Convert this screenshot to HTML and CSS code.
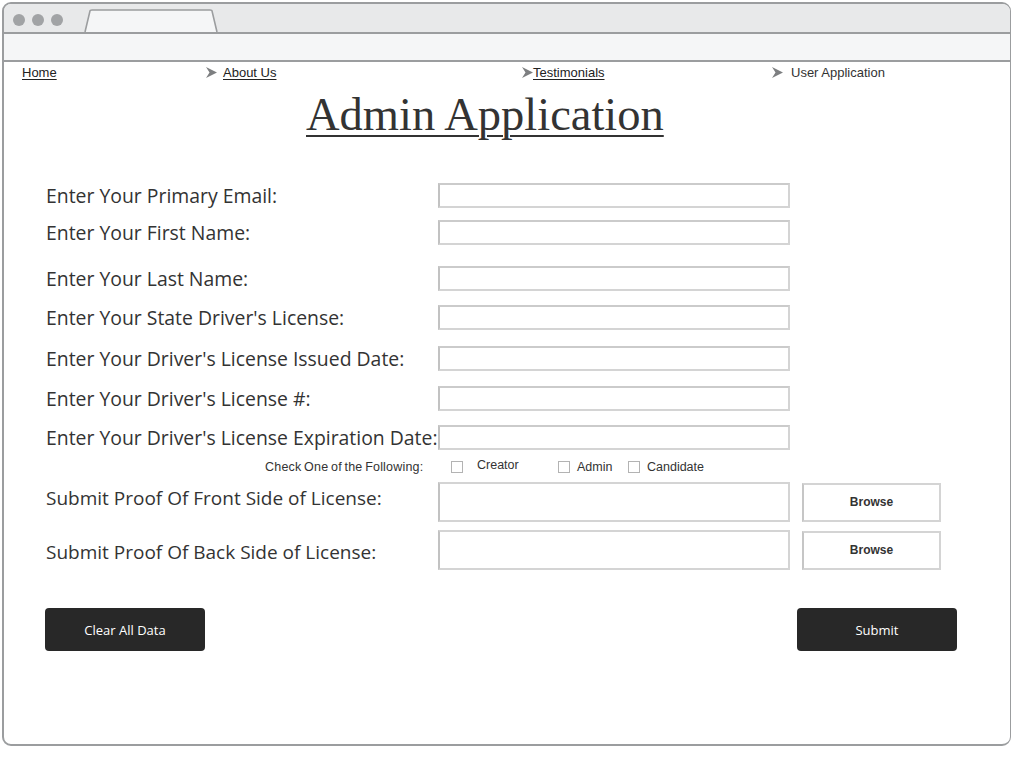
FILE: index.html
```html
<!DOCTYPE html>
<html>
<head>
<meta charset="utf-8">
<link rel="stylesheet" href="styles.css">
</head>
<body>
<div class="frame">
  <div class="tabbar">
    <div class="dots"><span class="dot"></span><span class="dot"></span><span class="dot"></span></div>
    <svg class="tab" width="134" height="24" viewBox="0 0 134 24">
      <path d="M1 23 L6 2 Q6 1 8 1 L126 1 Q128 1 128 2 L133 23" fill="#f5f6f7" stroke="#9b9d9f" stroke-width="1.6"/>
    </svg>
  </div>
  <div class="addressbar"></div>
  <div class="content">
    <nav class="crumbs">
      <div class="crumb"><a href="#">Home</a></div>
      <div class="crumb"><svg class="arrow" width="11" height="11" viewBox="0 0 11 11"><path d="M0 0 L11 5.5 L0 11 L3.5 5.5 Z" fill="#7d7f81"/></svg><a href="#">About Us</a></div>
      <div class="crumb tight"><svg class="arrow" width="11" height="11" viewBox="0 0 11 11"><path d="M0 0 L11 5.5 L0 11 L3.5 5.5 Z" fill="#7d7f81"/></svg><a href="#">Testimonials</a></div>
      <div class="crumb"><svg class="arrow" width="11" height="11" viewBox="0 0 11 11"><path d="M0 0 L11 5.5 L0 11 L3.5 5.5 Z" fill="#7d7f81"/></svg><span class="current">User Application</span></div>
    </nav>
    <h1 class="title">Admin Application</h1>

    <div class="form">
      <div class="row r1"><label>Enter Your Primary Email:</label><div class="field"></div></div>
      <div class="row r2"><label>Enter Your First Name:</label><div class="field"></div></div>
      <div class="row r3"><label>Enter Your Last Name:</label><div class="field"></div></div>
      <div class="row r4"><label>Enter Your State Driver's License:</label><div class="field"></div></div>
      <div class="row r5"><label>Enter Your Driver's License Issued Date:</label><div class="field"></div></div>
      <div class="row r6"><label>Enter Your Driver's License #:</label><div class="field"></div></div>
      <div class="row r7"><label>Enter Your Driver's License Expiration Date:</label><div class="field"></div></div>

      <div class="checks">
        <span class="checks-label">Check One of the Following:</span>
        <span class="opt opt-creator"><span class="box"></span><span class="opt-text raised">Creator</span></span>
        <span class="opt opt-admin"><span class="box"></span><span class="opt-text">Admin</span></span>
        <span class="opt"><span class="box"></span><span class="opt-text">Candidate</span></span>
      </div>

      <div class="filerow f1"><label>Submit Proof Of Front Side of License:</label><div class="filebox"></div><div class="browse">Browse</div></div>
      <div class="filerow f2"><label>Submit Proof Of Back Side of License:</label><div class="filebox"></div><div class="browse">Browse</div></div>

      <div class="actions">
        <button class="btn">Clear All Data</button>
        <button class="btn">Submit</button>
      </div>
    </div>
  </div>
</div>
</body>
</html>
```

FILE: styles.css
```css
* { box-sizing: border-box; }
html, body { margin: 0; padding: 0; background: #fff; }
body { width: 1024px; height: 768px; }

.frame {
  margin: 2px 0 0 2px;
  width: 1009px;
  height: 744px;
  border: 2px solid #9b9d9f;
  border-right-width: 1.5px;
  border-radius: 9px;
  overflow: hidden;
  background: #fff;
  display: flex;
  flex-direction: column;
}

.tabbar {
  height: 30px;
  background: #e8e9ea;
  border-bottom: 2px solid #9b9d9f;
  display: flex;
  align-items: flex-end;
  flex: none;
}
.dots { display: flex; gap: 7px; padding-left: 9px; align-self: flex-start; margin-top: 10px; }
.dot { width: 12px; height: 12px; border-radius: 50%; background: #a1a3a5; display: block; }
.tab { display: block; margin-left: 21px; margin-bottom: -1px; }

.addressbar {
  height: 28px;
  background: #f5f6f7;
  border-bottom: 2px solid #9b9d9f;
  flex: none;
}

.content { flex: 1; position: relative; }

.crumbs {
  display: grid;
  grid-template-columns: 184px 317px 249px auto;
  padding: 0 0 0 18px;
  font-family: "Liberation Sans", Arial, sans-serif;
  font-size: 13px;
  color: #222;
  height: 20px;
  align-items: center;
}
.crumb { display: flex; align-items: center; white-space: nowrap; }
.crumb a { color: #222; text-decoration: underline; text-underline-offset: 2px; }
.arrow { display: block; margin-right: 6px; flex: none; }
.tight .arrow { margin-right: 0; margin-left: -1px; }
.current { color: #333; margin-left: 2px; }

.title {
  margin: 6px 0 0 302px;
  font-family: "Liberation Serif", "Times New Roman", serif;
  font-weight: normal;
  font-size: 46.5px;
  line-height: 54px;
  color: #333;
  text-decoration: underline;
  text-decoration-thickness: 2px;
  text-underline-offset: 5px;
  display: inline-block;
}

.form { padding-left: 42px; font-family: "Open Sans", sans-serif; color: #333; }

.row { display: flex; align-items: center; height: 25px; }
.row label { width: 392px; font-size: 19.4px; white-space: nowrap; flex: none; }
.filerow label { width: 392px; font-size: 19px; white-space: nowrap; flex: none; }
.field {
  width: 352px; height: 25px;
  border: 2px solid #d4d4d4;
  border-left-color: #c2c2c2;
  border-top-color: #cbcbcb;
}
.r1 { margin-top: 41px; }
.r2 { margin-top: 12px; }
.r3 { margin-top: 21px; }
.r4 { margin-top: 14px; }
.r5 { margin-top: 16px; }
.r6 { margin-top: 15px; }
.r7 { margin-top: 14px; }

.checks {
  display: flex; align-items: center;
  margin-top: 6px; height: 22px;
  font-family: "Liberation Sans", Arial, sans-serif;
  font-size: 12.5px; color: #333;
}
.checks-label { margin-left: 219px; width: 186px; font-size: 12.5px; letter-spacing: 0.2px; word-spacing: -1px; }
.opt { display: flex; align-items: center; }
.box { width: 12px; height: 12px; border: 1px solid #b3b3b3; display: block; background: #fff; }
.opt-text { margin-left: 7px; }
.opt-text.raised { position: relative; top: -2px; margin-left: 14px; }
.opt-creator { width: 107px; }
.opt-admin { width: 70px; }

.filerow { display: flex; align-items: center; height: 40px; }
.filerow label { position: relative; }
.f1 { margin-top: 4px; }
.f1 label { top: -4px; }
.f2 { margin-top: 8px; }
.f2 label { top: 2px; }
.filebox {
  width: 352px; height: 40px;
  border: 2px solid #d4d4d4;
  border-left-color: #c2c2c2;
}
.browse {
  margin-left: 12px;
  width: 139px; height: 39px;
  border: 2px solid #d4d4d4;
  border-left-color: #c6c6c6;
  display: flex; align-items: center; justify-content: center;
  font-family: "Liberation Sans", Arial, sans-serif;
  font-weight: bold; font-size: 12px; color: #333;
}

.actions {
  display: flex; justify-content: space-between;
  width: 912px; margin-top: 38px; margin-left: -1px;
}
.btn {
  width: 160px; height: 43px;
  background: #282828; color: #fff;
  border: none; border-radius: 4px;
  font-family: "Open Sans", sans-serif; font-size: 13px;
}
```
